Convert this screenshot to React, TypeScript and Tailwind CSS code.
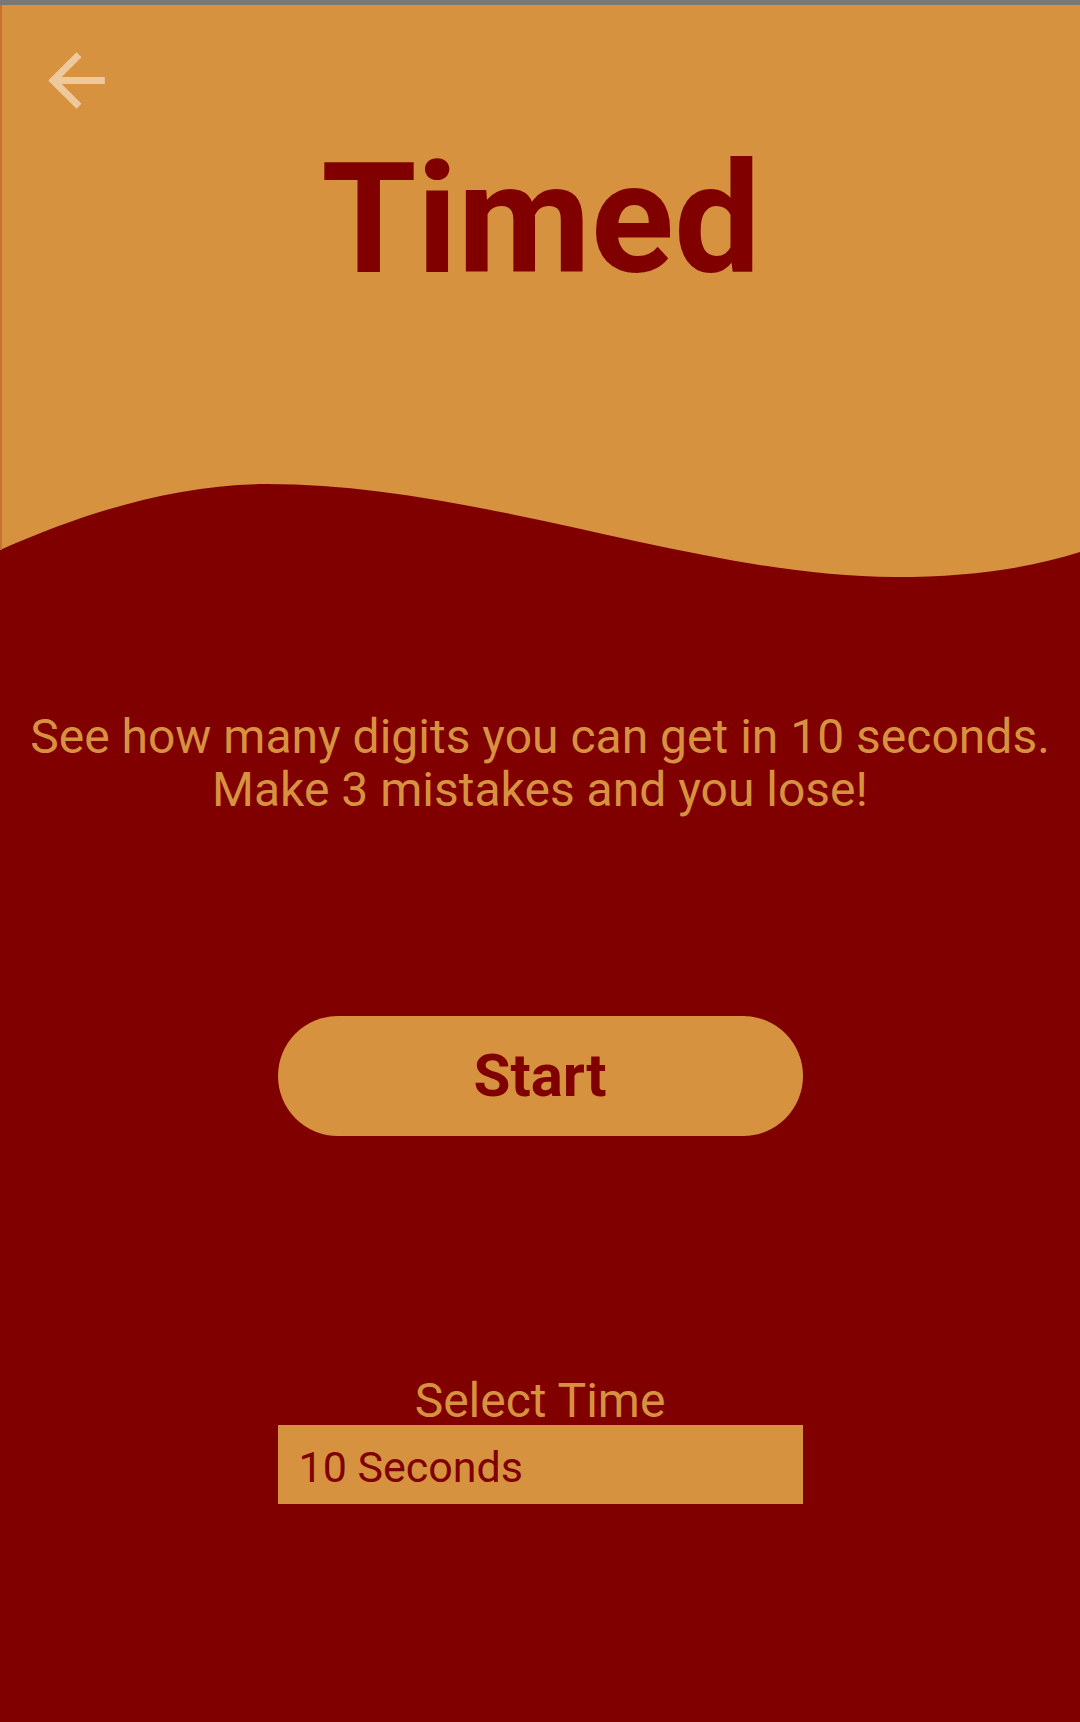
import React from "react";

export default function App() {
  return (
    <div
      className="w-[1080px] h-[1722px] bg-[#800000] flex flex-col overflow-hidden"
      style={{ fontFamily: "Roboto, 'Noto Sans', sans-serif" }}
    >
      <div className="h-[5px] bg-[#777777]" />
      <div className="h-[475px] bg-[#D79240] border-l-2 border-[#C8702E] flex flex-col">
        <div className="pt-[33px] pl-[32px]">
          <svg width="85" height="85" viewBox="0 0 24 24">
            <path
              d="M20 11H7.83l5.59-5.59L12 4l-8 8 8 8 1.41-1.41L7.83 13H20v-2z"
              fill="#EEC99B"
            />
          </svg>
        </div>
        <h1 className="mt-[20px] text-center text-[154px] leading-[154px] font-bold text-[#800000]">
          Timed
        </h1>
      </div>
      <svg width="1080" height="100" viewBox="0 0 1080 100" className="block">
        <path
          d="M0 0 L0 70 C90 30 180 4 267 4 C480 4 700 97 895 97 C970 97 1030 88 1080 72 L1080 0 Z"
          fill="#D79240"
        />
        <rect x="0" y="0" width="2" height="70" fill="#C8702E" />
      </svg>
      <p className="mt-[130px] text-center text-[48px] leading-[53px] text-[#D79240]">
        See how many digits you can get in 10 seconds.
        <br />
        Make 3 mistakes and you lose!
      </p>
      <div className="mt-[200px] flex justify-center">
        <button className="w-[525px] h-[120px] rounded-full bg-[#D79240] text-[#800000] text-[60px] font-bold flex items-center justify-center">
          Start
        </button>
      </div>
      <div className="mt-[241px] flex flex-col items-center">
        <div className="text-[48px] leading-[48px] text-[#D79240]">Select Time</div>
        <div className="w-[525px] h-[79px] bg-[#D79240] flex items-center pl-[21px] pt-[4px]">
          <span className="text-[43px] leading-[50px] text-[#800000]">10 Seconds</span>
        </div>
      </div>
    </div>
  );
}
